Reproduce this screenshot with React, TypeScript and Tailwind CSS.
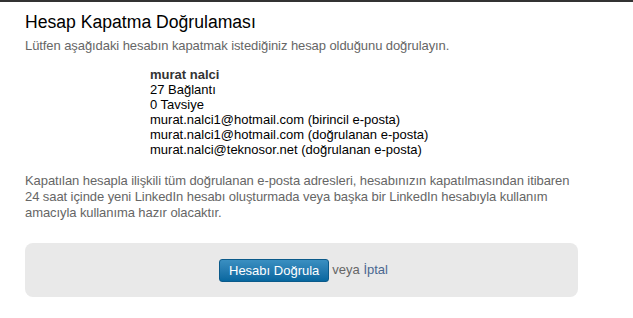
import { useState } from 'react';

const details = [
  '27 Bağlantı',
  '0 Tavsiye',
  'murat.nalci1@hotmail.com (birincil e-posta)',
  'murat.nalci1@hotmail.com (doğrulanan e-posta)',
  'murat.nalci@teknosor.net (doğrulanan e-posta)',
];

export default function App() {
  const [confirmed, setConfirmed] = useState(false);

  return (
    <div className="w-[633px] h-[318px] bg-white border-t-2 border-[#333] font-['Liberation_Sans',Arial,sans-serif] overflow-hidden">
      <div className="pl-[25px] pr-[55px]">
        {/* Title */}
        <h1 className="mt-[8px] text-[17.6px] leading-[24px] text-black">Hesap Kapatma Doğrulaması</h1>
        <p className="mt-[4px] text-[13px] leading-[16px] tracking-[-0.08px] text-[#666]">
          Lütfen aşağıdaki hesabın kapatmak istediğiniz hesap olduğunu doğrulayın.
        </p>

        {/* Account details */}
        <div className="mt-[13px] pl-[125px] text-[13px] leading-[15px] text-black">
          <div className="font-bold text-[#333]">murat nalci</div>
          {details.map((line) => (
            <div key={line}>{line}</div>
          ))}
        </div>

        <p className="mt-[16px] text-[13px] leading-[16px] tracking-[-0.08px] text-[#666]">
          Kapatılan hesapla ilişkili tüm doğrulanan e-posta adresleri, hesabınızın kapatılmasından itibaren
          24 saat içinde yeni LinkedIn hesabı oluşturmada veya başka bir LinkedIn hesabıyla kullanım
          amacıyla kullanıma hazır olacaktır.
        </p>

        {/* Actions */}
        <div className="mt-[22px] w-[553px] h-[54px] rounded-[8px] bg-[#e9e9e9] flex items-center justify-center pl-[4px]">
          <button
            onClick={() => setConfirmed(!confirmed)}
            className="h-[23px] px-[9px] rounded-[3px] border border-[#0b5a8a] bg-gradient-to-b from-[#3a8fc1] to-[#06679f] text-white text-[13px] leading-[19px]"
          >
            Hesabı Doğrula
          </button>
          <span className="ml-[3px] text-[13px] text-[#666]">
            veya <span className="text-[#4a6790]">İptal</span>
          </span>
        </div>
      </div>
    </div>
  );
}
